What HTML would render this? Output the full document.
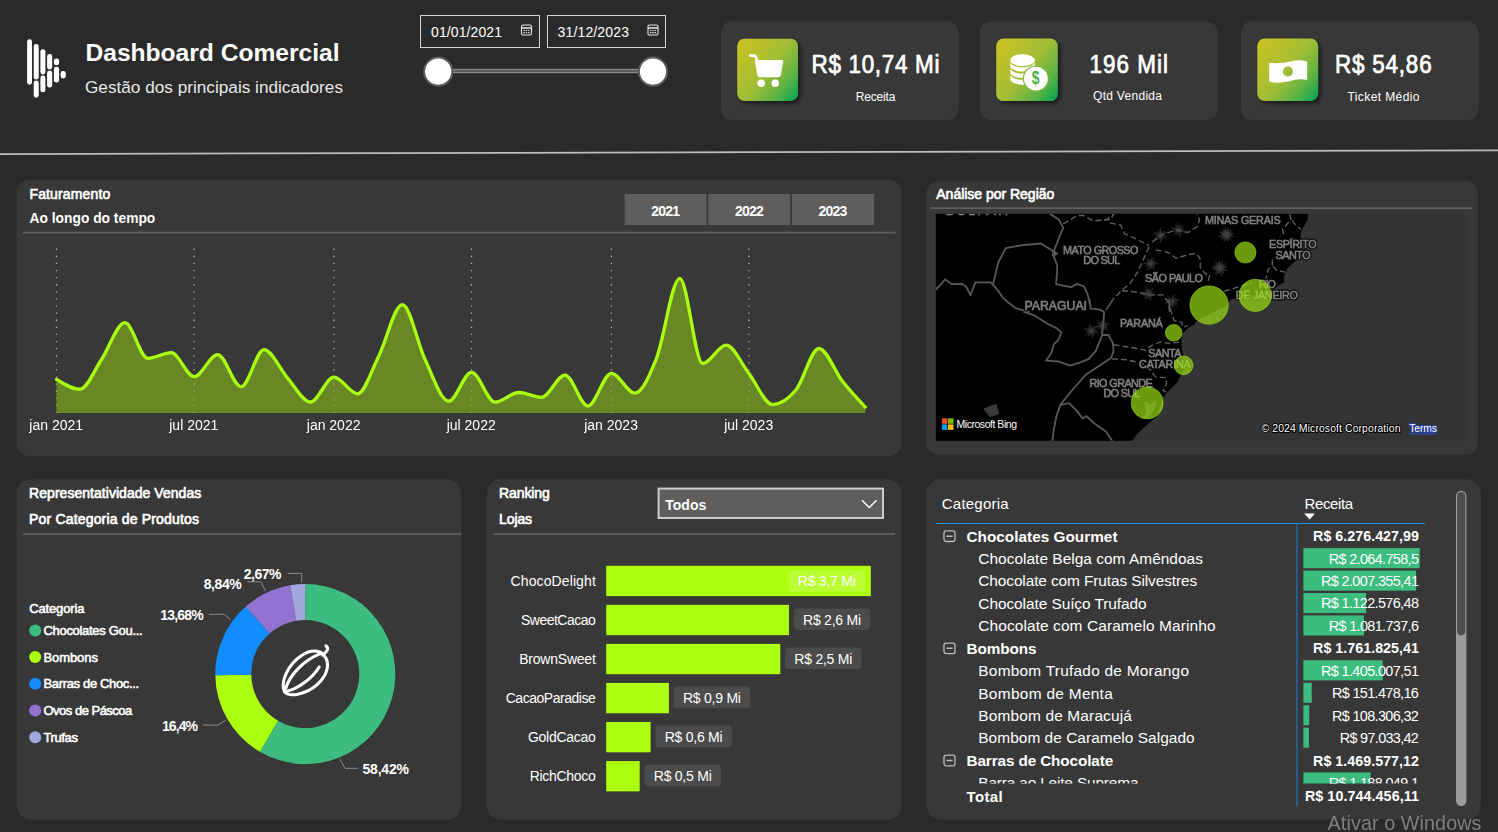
<!DOCTYPE html>
<html lang="pt-BR"><head><meta charset="utf-8"><title>Dashboard Comercial</title>
<style>
html,body{margin:0;padding:0}
body{width:1498px;height:832px;overflow:hidden;background:#2a2a2a;position:relative;font-family:'Liberation Sans',Arial,sans-serif;color:#fff}
section{position:absolute;display:block}
section svg{display:block;overflow:visible}

svg text{font-family:'Liberation Sans',Arial,sans-serif;white-space:pre}
.wm{position:absolute;left:0;top:0;width:1498px;height:832px;pointer-events:none}
</style></head>
<body>
<section class="hdr" style="left:0px;top:0px;width:700px;height:130px" aria-label="Cabeçalho"><svg width="700" height="130" viewBox="0 0 700 130">
<g fill="#fff"><rect x="27.1" y="39.3" width="4.9" height="45.4" rx="2.4" fill="#fff"/><rect x="33.7" y="44.1" width="5" height="35.5" rx="2.4" fill="#fff"/><rect x="33.7" y="80.5" width="5" height="17.2" rx="2.4" fill="#fff"/><rect x="40.4" y="49.2" width="5" height="25.2" rx="2.4" fill="#fff"/><rect x="40.4" y="75.4" width="5" height="16.9" rx="2.4" fill="#fff"/><rect x="47.1" y="54" width="5.1" height="15.5" rx="2.4" fill="#fff"/><rect x="47.1" y="70.6" width="5.1" height="17" rx="2.4" fill="#fff"/><rect x="53.9" y="58.6" width="5.2" height="6.7" rx="2.4" fill="#fff"/><rect x="53.9" y="66.8" width="5.2" height="15.8" rx="2.4" fill="#fff"/><rect x="60.6" y="71" width="5.2" height="7.4" rx="2.4" fill="#fff"/></g>
<text x="85.5" y="60.75" font-size="24.6" font-weight="700" fill="#fff" textLength="254" lengthAdjust="spacing">Dashboard Comercial</text>
<text x="85" y="93" font-size="17.2" fill="#e8e8e8" textLength="258" lengthAdjust="spacing">Gestão dos principais indicadores</text>
<rect x="420.5" y="15.5" width="119" height="32" fill="none" stroke="#d2d2d2" stroke-width="1"/>
<text x="431" y="37" font-size="14" fill="#fff" textLength="71" lengthAdjust="spacing">01/01/2021</text>
<g transform="translate(520.9 24.4)" fill="none" stroke="#e4e4e4" stroke-width="1.1"><rect x="0.6" y="0.6" width="10" height="10" rx="1.6"/><path d="M0.6 3.6H10.6" stroke-width="1.6"/><path d="M2.6 6.1h1.4M4.9 6.1h1.4M7.2 6.1h1.4M2.6 8.3h1.4M4.9 8.3h1.4M7.2 8.3h1.4" stroke-width="1.2"/></g>
<rect x="547.5" y="15.5" width="118" height="32" fill="none" stroke="#d2d2d2" stroke-width="1"/>
<text x="557.5" y="37" font-size="14" fill="#fff" textLength="71.5" lengthAdjust="spacing">31/12/2023</text>
<g transform="translate(647.4 24.4)" fill="none" stroke="#e4e4e4" stroke-width="1.1"><rect x="0.6" y="0.6" width="10" height="10" rx="1.6"/><path d="M0.6 3.6H10.6" stroke-width="1.6"/><path d="M2.6 6.1h1.4M4.9 6.1h1.4M7.2 6.1h1.4M2.6 8.3h1.4M4.9 8.3h1.4M7.2 8.3h1.4" stroke-width="1.2"/></g>
<rect x="438" y="68.8" width="215" height="4.4" fill="#8a8885"/>
<rect x="438" y="70" width="215" height="2" fill="#605e5c"/>
<circle cx="438.2" cy="71.6" r="15.1" fill="#5f5c58"/><circle cx="438.2" cy="71.6" r="13.1" fill="#fff"/>
<circle cx="653" cy="71.6" r="15.1" fill="#5f5c58"/><circle cx="653" cy="71.6" r="13.1" fill="#fff"/>
</svg></section>
<section class="kpi" style="left:700px;top:0px;width:798px;height:130px" aria-label="Indicadores"><svg width="798" height="130" viewBox="700 0 798 130">
<defs><linearGradient id="kg" x1="0" y1="0.1" x2="1" y2="0.9"><stop offset="0" stop-color="#c9c223"/><stop offset="0.5" stop-color="#a2be35"/><stop offset="0.78" stop-color="#62b444"/><stop offset="1" stop-color="#10a551"/></linearGradient><filter id="ks" x="-20%" y="-20%" width="150%" height="150%"><feDropShadow dx="2.5" dy="2.5" stdDeviation="2" flood-color="#000" flood-opacity="0.55"/></filter></defs>
<rect x="721" y="21.5" width="237.5" height="98.5" rx="10.5" fill="#383838"/>
<rect x="737.2" y="38.7" width="60.8" height="62.3" rx="7.4" fill="url(#kg)" filter="url(#ks)"/>
<rect x="979.7" y="21.5" width="237.8" height="98.5" rx="10.5" fill="#383838"/>
<rect x="996.2" y="38.5" width="61.6" height="62.6" rx="7.4" fill="url(#kg)" filter="url(#ks)"/>
<rect x="1241" y="21.5" width="237.5" height="98.5" rx="10.5" fill="#383838"/>
<rect x="1257.3" y="38.6" width="60.8" height="62.4" rx="7.4" fill="url(#kg)" filter="url(#ks)"/>
<text transform="translate(811.5 72.6) scale(0.9 1)" font-size="24.9" fill="#fff" textLength="142.22" lengthAdjust="spacing" stroke="#fff" stroke-width="0.75">R$ 10,74 Mi</text>
<text x="855.8" y="100.5" font-size="12" fill="#fff" textLength="39.6" lengthAdjust="spacing">Receita</text>
<text transform="translate(1089.5 72.8) scale(0.9 1)" font-size="24.9" fill="#fff" textLength="87.22" lengthAdjust="spacing" stroke="#fff" stroke-width="0.75">196 Mil</text>
<text x="1093" y="100" font-size="12" fill="#fff" textLength="69" lengthAdjust="spacing">Qtd Vendida</text>
<text transform="translate(1335 73.3) scale(0.9 1)" font-size="24.9" fill="#fff" textLength="107.33" lengthAdjust="spacing" stroke="#fff" stroke-width="0.75">R$ 54,86</text>
<text x="1347.5" y="100.6" font-size="12" fill="#fff" textLength="72" lengthAdjust="spacing">Ticket Médio</text>
<path d="M750.28 55.57 L753.57 55.57 Q755.76 55.57 756.22 57.94 L757.04 62.15" fill="none" stroke="#fff" stroke-width="2.7" stroke-linecap="round" stroke-linejoin="round"/>
<path d="M754.66 59.95 L781.89 59.95 Q783.53 59.95 783.26 61.6 L780.79 75.3 Q780.42 77.13 778.6 77.13 L759.41 77.31 Q757.77 77.31 757.4 75.66 Z" fill="#fff"/>
<circle cx="761.24" cy="83.34" r="3.75" fill="#fff"/><circle cx="775.22" cy="83.34" r="3.75" fill="#fff"/>
<ellipse cx="1022.53" cy="60.14" rx="12.24" ry="5.94" fill="#fff"/>
<path d="M1010.28 61.6 A12.24 5.76 0 0 0 1034.77 61.6 L1034.77 65.8 A12.24 5.76 0 0 1 1010.28 65.8 Z" fill="#fff"/>
<path d="M1010.28 67.81 A12.24 5.76 0 0 0 1034.77 67.81 L1034.77 72.19 A12.24 5.76 0 0 1 1010.28 72.19 Z" fill="#fff"/>
<path d="M1010.28 74.02 A12.24 5.76 0 0 0 1034.77 74.02 L1034.77 78.95 A12.24 5.76 0 0 1 1010.28 78.95 Z" fill="#fff"/>
<circle cx="1035.86" cy="78.59" r="13.06" fill="#80b83e"/>
<circle cx="1035.86" cy="78.59" r="11.88" fill="#fff"/>
<text transform="translate(1035.68 84.43) scale(0.8 1)" font-size="17.5" font-weight="700" text-anchor="middle" fill="#52ad47">$</text>
<path fill-rule="evenodd" fill="#fff" d="M1269.18 62.69 C1276.49 63.97 1284.71 62.69 1291.11 61.23 C1297.5 59.77 1302.98 59.95 1307.18 61.78 L1307.18 80.23 C1302.98 78.77 1297.5 79.32 1291.11 80.78 C1284.71 82.42 1276.49 83.7 1269.18 81.51 Z M1282.89 71.46 a5.02 5.02 0 1 0 10.05 0 a5.02 5.02 0 1 0 -10.05 0Z"/>
</svg></section>
<section class="card" style="left:16px;top:179px;width:886px;height:277px" aria-label="Faturamento"><svg width="886" height="277" viewBox="16 179 886 277">
<rect class="cardbg" x="16.6" y="179.9" width="885.2" height="276.1" rx="12.5" fill="#383838"/>
<text x="29.5" y="198.9" font-size="14" fill="#fff" textLength="80.7" lengthAdjust="spacing" stroke="#fff" stroke-width="0.65">Faturamento</text>
<text x="29.5" y="222.9" font-size="13.8" font-weight="700" fill="#fff" textLength="125.8" lengthAdjust="spacing">Ao longo do tempo</text>
<path d="M23 232.7H895.5" stroke="#615f5d" stroke-width="1.7"/>
<rect x="624.6" y="194" width="82" height="31" fill="#605e5c"/>
<text x="651.2" y="216" font-size="14" font-weight="700" fill="#fff" textLength="28.8" lengthAdjust="spacing">2021</text>
<rect x="708.3" y="194" width="82" height="31" fill="#605e5c"/>
<text x="734.9" y="216" font-size="14" font-weight="700" fill="#fff" textLength="28.8" lengthAdjust="spacing">2022</text>
<rect x="792" y="194" width="82" height="31" fill="#605e5c"/>
<text x="818.6" y="216" font-size="14" font-weight="700" fill="#fff" textLength="28.8" lengthAdjust="spacing">2023</text>
<g stroke="#b4b4b4" stroke-width="1.3" stroke-dasharray="1.3 5.8"><path d="M56.5 248.6V412.9"/><path d="M194.08 248.6V412.9"/><path d="M333.94 248.6V412.9"/><path d="M471.51 248.6V412.9"/><path d="M611.37 248.6V412.9"/><path d="M748.95 248.6V412.9"/></g>
<path d="M56.5 379.4 C64.35 384.3 72.21 389.2 80.06 389.2 C87.16 389.2 94.25 370.25 101.35 359.8 C109.2 348.23 117.05 322.7 124.91 322.7 C132.51 322.7 140.11 358.3 147.71 358.3 C155.57 358.3 163.42 352.7 171.28 352.7 C178.88 352.7 186.48 376.7 194.08 376.7 C201.93 376.7 209.79 354.6 217.64 354.6 C225.5 354.6 233.35 386.7 241.2 386.7 C248.81 386.7 256.41 349.6 264.01 349.6 C271.86 349.6 279.72 369.23 287.57 378.1 C295.17 386.69 302.77 402.1 310.37 402.1 C318.23 402.1 326.08 377.1 333.94 377.1 C341.79 377.1 349.65 393.8 357.5 393.8 C364.59 393.8 371.69 369.96 378.78 356 C386.64 340.54 394.49 304.6 402.35 304.6 C409.95 304.6 417.55 343.88 425.15 359.8 C433 376.25 440.86 401.2 448.71 401.2 C456.31 401.2 463.91 372.3 471.51 372.3 C479.37 372.3 487.22 402.1 495.08 402.1 C502.93 402.1 510.79 392.5 518.64 392.5 C526.24 392.5 533.84 397.3 541.44 397.3 C549.3 397.3 557.15 375.2 565.01 375.2 C572.61 375.2 580.21 406 587.81 406 C595.66 406 603.52 373.3 611.37 373.3 C619.23 373.3 627.08 393.1 634.94 393.1 C642.03 393.1 649.12 376.5 656.22 359 C664.07 339.62 671.93 278.3 679.78 278.3 C687.38 278.3 694.98 363.5 702.59 363.5 C710.44 363.5 718.29 345.2 726.15 345.2 C733.75 345.2 741.35 363.77 748.95 373.5 C756.81 383.55 764.66 404.6 772.51 404.6 C780.37 404.6 788.22 399.46 796.08 389.8 C803.68 380.46 811.28 348.5 818.88 348.5 C826.73 348.5 834.59 371.31 842.44 381.2 C850.04 390.78 857.65 398.94 865.25 407.1 L865.25 412.9 L56.5 412.9Z" fill="#6a8a25" fill-opacity="0.97"/>
<g stroke="#9fb46a" stroke-width="1.3" stroke-dasharray="1.3 5.8" opacity="0.8"><path d="M56.5 248.6V412.9" clip-path="url(#areaclip)"/><path d="M194.08 248.6V412.9" clip-path="url(#areaclip)"/><path d="M333.94 248.6V412.9" clip-path="url(#areaclip)"/><path d="M471.51 248.6V412.9" clip-path="url(#areaclip)"/><path d="M611.37 248.6V412.9" clip-path="url(#areaclip)"/><path d="M748.95 248.6V412.9" clip-path="url(#areaclip)"/></g>
<clipPath id="areaclip"><path d="M56.5 379.4 C64.35 384.3 72.21 389.2 80.06 389.2 C87.16 389.2 94.25 370.25 101.35 359.8 C109.2 348.23 117.05 322.7 124.91 322.7 C132.51 322.7 140.11 358.3 147.71 358.3 C155.57 358.3 163.42 352.7 171.28 352.7 C178.88 352.7 186.48 376.7 194.08 376.7 C201.93 376.7 209.79 354.6 217.64 354.6 C225.5 354.6 233.35 386.7 241.2 386.7 C248.81 386.7 256.41 349.6 264.01 349.6 C271.86 349.6 279.72 369.23 287.57 378.1 C295.17 386.69 302.77 402.1 310.37 402.1 C318.23 402.1 326.08 377.1 333.94 377.1 C341.79 377.1 349.65 393.8 357.5 393.8 C364.59 393.8 371.69 369.96 378.78 356 C386.64 340.54 394.49 304.6 402.35 304.6 C409.95 304.6 417.55 343.88 425.15 359.8 C433 376.25 440.86 401.2 448.71 401.2 C456.31 401.2 463.91 372.3 471.51 372.3 C479.37 372.3 487.22 402.1 495.08 402.1 C502.93 402.1 510.79 392.5 518.64 392.5 C526.24 392.5 533.84 397.3 541.44 397.3 C549.3 397.3 557.15 375.2 565.01 375.2 C572.61 375.2 580.21 406 587.81 406 C595.66 406 603.52 373.3 611.37 373.3 C619.23 373.3 627.08 393.1 634.94 393.1 C642.03 393.1 649.12 376.5 656.22 359 C664.07 339.62 671.93 278.3 679.78 278.3 C687.38 278.3 694.98 363.5 702.59 363.5 C710.44 363.5 718.29 345.2 726.15 345.2 C733.75 345.2 741.35 363.77 748.95 373.5 C756.81 383.55 764.66 404.6 772.51 404.6 C780.37 404.6 788.22 399.46 796.08 389.8 C803.68 380.46 811.28 348.5 818.88 348.5 C826.73 348.5 834.59 371.31 842.44 381.2 C850.04 390.78 857.65 398.94 865.25 407.1 L865.25 412.9 L56.5 412.9Z"/></clipPath>
<path d="M56.5 379.4 C64.35 384.3 72.21 389.2 80.06 389.2 C87.16 389.2 94.25 370.25 101.35 359.8 C109.2 348.23 117.05 322.7 124.91 322.7 C132.51 322.7 140.11 358.3 147.71 358.3 C155.57 358.3 163.42 352.7 171.28 352.7 C178.88 352.7 186.48 376.7 194.08 376.7 C201.93 376.7 209.79 354.6 217.64 354.6 C225.5 354.6 233.35 386.7 241.2 386.7 C248.81 386.7 256.41 349.6 264.01 349.6 C271.86 349.6 279.72 369.23 287.57 378.1 C295.17 386.69 302.77 402.1 310.37 402.1 C318.23 402.1 326.08 377.1 333.94 377.1 C341.79 377.1 349.65 393.8 357.5 393.8 C364.59 393.8 371.69 369.96 378.78 356 C386.64 340.54 394.49 304.6 402.35 304.6 C409.95 304.6 417.55 343.88 425.15 359.8 C433 376.25 440.86 401.2 448.71 401.2 C456.31 401.2 463.91 372.3 471.51 372.3 C479.37 372.3 487.22 402.1 495.08 402.1 C502.93 402.1 510.79 392.5 518.64 392.5 C526.24 392.5 533.84 397.3 541.44 397.3 C549.3 397.3 557.15 375.2 565.01 375.2 C572.61 375.2 580.21 406 587.81 406 C595.66 406 603.52 373.3 611.37 373.3 C619.23 373.3 627.08 393.1 634.94 393.1 C642.03 393.1 649.12 376.5 656.22 359 C664.07 339.62 671.93 278.3 679.78 278.3 C687.38 278.3 694.98 363.5 702.59 363.5 C710.44 363.5 718.29 345.2 726.15 345.2 C733.75 345.2 741.35 363.77 748.95 373.5 C756.81 383.55 764.66 404.6 772.51 404.6 C780.37 404.6 788.22 399.46 796.08 389.8 C803.68 380.46 811.28 348.5 818.88 348.5 C826.73 348.5 834.59 371.31 842.44 381.2 C850.04 390.78 857.65 398.94 865.25 407.1" fill="none" stroke="#a9ff10" stroke-width="3.3" stroke-linecap="round" stroke-linejoin="round"/>
<text x="56.2" y="430" font-size="14" text-anchor="middle" fill="#fff">jan 2021</text>
<text x="193.78" y="430" font-size="14" text-anchor="middle" fill="#fff">jul 2021</text>
<text x="333.64" y="430" font-size="14" text-anchor="middle" fill="#fff">jan 2022</text>
<text x="471.21" y="430" font-size="14" text-anchor="middle" fill="#fff">jul 2022</text>
<text x="611.07" y="430" font-size="14" text-anchor="middle" fill="#fff">jan 2023</text>
<text x="748.65" y="430" font-size="14" text-anchor="middle" fill="#fff">jul 2023</text>
</svg></section>
<section class="card" style="left:926px;top:181px;width:553px;height:274px" aria-label="Análise por Região"><svg width="553" height="274" viewBox="926 181 553 274">
<rect class="cardbg" x="926.4" y="181.2" width="551.7" height="273.6" rx="12.5" fill="#383838"/>
<text x="936.3" y="198.9" font-size="14" fill="#fff" textLength="118" lengthAdjust="spacing" stroke="#fff" stroke-width="0.65">Análise por Região</text>
<path d="M930 208.1H1472.5" stroke="#615f5d" stroke-width="1.7"/>
<clipPath id="mclip"><rect x="935.8" y="213.8" width="531.2" height="227"/></clipPath>
<g clip-path="url(#mclip)">
<rect x="935.8" y="213.8" width="531.2" height="227" fill="#343434"/>
<path d="M933.8 211.8 L1307.73 211.8 L1307.73 213.8 L1307.97 219.21 L1305.32 224.02 L1302.32 228.82 L1300.52 234.83 L1300.76 240.84 L1300.52 248.05 L1299.56 254.06 L1298.11 258.86 L1292.11 263.67 L1287.3 268.48 L1284.9 273.28 L1283.69 279.29 L1284.9 281.69 L1278.89 285.3 L1274.08 288.9 L1264.47 291.91 L1250.05 296.11 L1238.03 297.92 L1232.02 298.76 L1227.22 303.32 L1228.04 305.93 L1219.63 308.74 L1212.15 313.41 L1201.87 318.08 L1195.33 322.76 L1194.65 323.89 L1187.82 328.16 L1181.85 334.13 L1181.34 342.66 L1181.85 349.49 L1183.56 356.31 L1184.41 368.26 L1181 375.09 L1177.58 381.91 L1169.05 390.44 L1163.08 397.27 L1160.52 405.8 L1157.11 416.04 L1150.28 422.01 L1143.45 427.99 L1136.63 434.81 L1131.51 441.64 L1130.51 442.8 L933.8 442.8Z" fill="#000"/>
<path d="M1144.48 402.05 C1145.22 400.97 1148.74 404.72 1150.62 404.44 C1152.5 404.15 1155.17 399.54 1155.74 400.34 C1156.31 401.14 1155.06 406.54 1154.03 409.22 C1153.01 411.89 1151.36 414.9 1149.6 416.38 C1147.83 417.86 1144.02 419 1143.45 418.09 C1142.89 417.18 1146.01 413.59 1146.18 410.92 C1146.35 408.25 1143.74 403.13 1144.48 402.05Z" fill="#343434"/>
<path d="M983.27 408.5 L996.36 403.83 L999.16 414.11 L989.81 416.92 L986.07 412.24Z" fill="#3a3a3a"/>
<g fill="none" stroke="#585858" stroke-width="1.8" stroke-linejoin="round" stroke-linecap="round"><path d="M935.8 289.51 L941.21 284.1 L945.06 279.29 L951.42 284.1 L961.64 283.86 L966.2 286.5 L970.41 295.15 L975.46 282.3 L990.48 282.3 L992.88 284.7"/><path d="M992.88 284.7 L998.29 262.47 L1005.74 248.05 L1022.92 245.04 L1040.95 243.48 L1052.96 251.05 L1057.17 253.46 L1052.96 255.86 L1052.96 251.05"/><path d="M1049.96 213.8 L1058.97 219.81 L1063.18 227.62 L1058.97 237.84 L1054.16 250.45"/><path d="M1054.16 251.65 L1054.16 257.66 L1057.17 264.87 L1057.17 272.08 L1055.97 284.1 L1070.99 287.1 L1076.99 283.86 L1084.2 286.5 L1087.81 294.91 L1090.21 305.73 L1089.7 300 L1090.55 308.53 L1099.09 309.39 L1104.2 311.95 L1103.35 322.18 L1102.16 334.13"/><path d="M992.88 284.7 L997.69 290.11 L1002.49 297.32 L1008.5 302.72 L1015.71 308.13 L1028.93 311.98 L1024 311.95 L1034.24 315.36 L1046.18 323.04 L1056.42 328.16 L1061.54 332.42 L1058.13 340.1 L1053.86 344.37 L1051.3 352.9 L1046.18 360.58 L1058.13 361.43 L1070.08 365.7 L1080.31 362.29 L1088.85 358.87 L1095.67 351.19 L1099.94 340.96 L1102.16 334.98"/><path d="M1102.16 334.98 L1108.47 334.98 L1112.74 342.66 L1113.59 351.19 L1111.03 358.02 L1100.79 364.85 L1085.43 375.09 L1073.49 388.74 L1060.69 404.1"/><path d="M1060.69 404.1 L1056.42 416.04 L1053.86 429.69 L1052.16 441.64"/><path d="M1060.69 404.95 L1069.22 403.24 L1076.9 410.92 L1082.87 418.6 L1086.29 416.04 L1095.67 424.57 L1105.91 431.4 L1112.74 441.64"/></g>
<g fill="none" stroke="#606060" stroke-width="1.35" stroke-dasharray="6 3" stroke-linejoin="round"><path d="M1063.18 224.02 L1076.99 215.6 L1083 215.36 L1093.82 221.01 L1107.04 219.21 L1114 213.8"/><path d="M1104 220.41 L1111.21 219.21 L1113.01 214.4"/><path d="M1110.01 222.81 L1120.82 225.22 L1124.43 233.63 L1137.65 239.64 L1149.06 245.65"/><path d="M1152.07 242.04 L1161.68 234.83 L1176.1 230.02 L1188.11 232.43 L1197.73 226.42 L1199.53 219.21 L1196.53 214.4"/><path d="M1155.67 249.85 L1168.89 252.86 L1176.1 258.26 L1188.11 254.66 L1196.53 253.46 L1200.73 260.07 L1200.13 267.28 L1206.14 274.48 L1209.74 274.48 L1207.94 281.69"/><path d="M1149.06 246.85 L1143.65 258.86 L1137.65 272.08 L1130.44 282.9 L1122.02 290.11 L1113.61 298.52 L1106.4 309.33 L1112.74 300 L1105.91 310.24"/><path d="M1122.02 290.71 L1135.24 291.91 L1149.66 294.91 L1162.88 294.91 L1168.89 303.32 L1169.49 311.98 L1169.05 300 L1170.76 310.24 L1174.17 320.48 L1181.85 322.18 L1182.7 327.3 L1187.82 325.6"/><path d="M1224.16 291.31 L1239.78 286.5 L1251.8 282.9"/><path d="M1289.7 213.8 L1290.9 219.21 L1286.1 225.22 L1282.49 228.82 L1284.3 237.23"/><path d="M1292.11 220.41 L1295.71 225.22 L1301.12 229.42"/><path d="M1272.28 259.46 L1272.28 264.87 L1268.07 269.68 L1266.87 275.69 L1265.67 279.29"/><path d="M1272.88 266.07 L1276.48 270.28 L1284.9 272.08"/><path d="M1113.59 344.71 L1133.22 347.78 L1146.01 350.34 L1150.28 346.08 L1160.52 341.81 L1169.05 343.52 L1181 341.81"/><path d="M1111.88 358.87 L1126.39 359.73 L1141.75 363.14 L1150.28 369.97 L1155.4 376.79 L1165.64 377.65 L1166.49 383.62 L1163.08 390.44 L1166.49 392.15"/></g>
<path d="M1157.53 231.9L1163.42 238.97M1158.41 229.69L1162.54 241.17M1160.51 227.83L1160.45 243.03M1162.07 231.12L1158.89 239.75M1164.42 230.78L1156.54 240.09M1167.07 231.66L1153.88 239.2M1165.01 234.65L1155.94 236.21M1166.48 236.52L1154.47 234.35M1167.04 239.26L1153.91 231.6M1174.99 227.06L1182.02 232.99M1175.47 224.73L1181.53 235.32M1177.21 222.54L1179.8 237.51M1179.31 225.5L1177.69 234.55M1181.57 224.75L1175.43 235.3M1184.34 225.16L1172.66 234.89M1182.83 228.47L1174.17 231.58M1184.6 230.04L1172.4 230.01M1185.63 232.65L1171.37 227.4M1222.95 231.39L1230.18 237.07M1223.35 229.05L1229.78 239.41M1225.01 226.79L1228.12 241.67M1227.22 229.68L1225.91 238.78M1229.45 228.85L1223.68 239.61M1232.23 229.16L1220.9 239.3M1230.84 232.52L1222.3 235.94M1232.66 234.04L1220.47 234.42M1233.79 236.6L1219.35 231.86M1217.94 262.9L1220.78 271.65M1219.57 261.18L1219.14 273.37M1222.21 260.23L1216.51 274.32M1222.44 263.86L1216.28 270.69M1224.74 264.41L1213.97 270.14M1226.88 266.22L1211.83 268.33M1223.86 268.23L1214.86 266.32M1224.53 270.51L1214.18 264.04M1224.03 273.27L1214.68 261.29M1146.56 262.03L1155.16 265.31M1146.25 259.68L1155.48 267.66M1147.16 257.03L1154.57 270.31M1150.13 259.13L1151.6 268.21M1152.01 257.68L1149.72 269.66M1154.76 257.14L1146.97 270.2M1154.43 260.77L1147.3 266.58M1156.63 261.67L1145.1 265.67M1158.46 263.78L1143.26 263.56M1144.56 291.27L1152.36 296.16M1144.71 288.9L1152.21 298.53M1146.13 286.48L1150.79 300.94M1148.63 289.11L1148.29 298.31M1150.76 288.06L1146.16 299.36M1153.56 288.07L1143.36 299.35M1152.53 291.56L1144.39 295.86M1154.5 292.87L1142.42 294.55M1155.89 295.31L1141.03 292.12M1170.8 297.25L1174.19 305.8M1172.32 295.42L1172.67 307.62M1174.89 294.31L1170.1 308.73M1175.35 297.91L1169.64 305.13M1177.69 298.32L1167.3 304.72M1179.94 299.99L1165.05 303.05M1177.04 302.19L1167.94 300.85M1177.86 304.42L1167.13 298.62M1177.54 307.2L1167.44 295.84M1097.92 325.15L1107.08 326.05M1097 322.96L1108 328.24M1097.18 320.16L1107.81 331.03M1100.6 321.41L1104.4 329.79M1102.03 319.51L1102.96 331.68M1104.55 318.28L1100.45 332.92M1105.18 321.86L1099.82 329.34M1107.53 322.15L1097.46 329.04M1109.86 323.71L1095.14 327.48M1087.91 327.73L1094.91 333.7M1088.4 325.41L1094.41 336.02M1090.15 323.22L1092.67 338.21M1092.24 326.19L1090.57 335.24M1094.5 325.46L1088.31 335.97M1097.27 325.88L1085.55 335.56M1095.74 329.18L1087.07 332.26M1097.51 330.77L1085.31 330.67M1098.53 333.37L1084.29 328.06M1221.45 234.3L1230.59 235.37M1220.57 232.09L1231.47 237.57M1220.8 229.3L1231.23 240.36M1224.19 230.61L1227.84 239.05M1225.66 228.74L1226.37 240.92M1228.2 227.55L1223.84 242.11M1228.76 231.14L1223.27 238.52M1231.11 231.48L1220.92 238.18M1233.41 233.08L1218.62 236.58M1216.23 265.85L1223.78 271.11M1216.5 263.49L1223.52 273.46M1218.02 261.14L1221.99 275.81M1220.4 263.89L1219.62 273.06M1222.57 262.94L1217.45 274.01M1225.37 263.09L1214.65 273.87M1224.17 266.52L1215.84 270.43M1226.08 267.93L1213.93 269.02M1227.35 270.42L1212.66 266.53" stroke="#505050" stroke-width="0.75" opacity="0.8"/>
<g fill="#0a0a0a" stroke="#0a0a0a" stroke-width="2.8" stroke-linejoin="round" opacity="0.99">
<text x="1063.1" y="253.6" font-size="10.8" textLength="75.3" lengthAdjust="spacing">MATO GROSSO</text>
<text x="1083.3" y="263.9" font-size="10.8" textLength="37" lengthAdjust="spacing">DO SUL</text>
<text x="1024.4" y="309.8" font-size="12.3" textLength="62.6" lengthAdjust="spacing">PARAGUAI</text>
<text x="1144.9" y="282.4" font-size="10.8" textLength="58.1" lengthAdjust="spacing">SÃO PAULO</text>
<text x="1120.1" y="327.4" font-size="10.8" textLength="42.6" lengthAdjust="spacing">PARANÁ</text>
<text x="1204.9" y="223.5" font-size="10.8" textLength="75.8" lengthAdjust="spacing">MINAS GERAIS</text>
<text x="1269.1" y="248.1" font-size="10.8" textLength="47.5" lengthAdjust="spacing">ESPÍRITO</text>
<text x="1275.4" y="258.9" font-size="10.8" textLength="35.2" lengthAdjust="spacing">SANTO</text>
<text x="1259.1" y="288.3" font-size="10.8" textLength="16.8" lengthAdjust="spacing">RIO</text>
<text x="1235.8" y="299.2" font-size="10.8" textLength="62.2" lengthAdjust="spacing">DE JANEIRO</text>
<text x="1148.3" y="357.2" font-size="10.8" textLength="33.1" lengthAdjust="spacing">SANTA</text>
<text x="1139" y="368" font-size="10.8" textLength="51.8" lengthAdjust="spacing">CATARINA</text>
<text x="1089.4" y="386.6" font-size="10.8" textLength="63.4" lengthAdjust="spacing">RIO GRANDE</text>
<text x="1103.5" y="397.3" font-size="10.8" textLength="36.8" lengthAdjust="spacing">DO SUL</text>
<text x="946" y="214.9" font-size="12.3" textLength="61.3" lengthAdjust="spacing">BOLÍVIA</text>
</g>
<g fill="#858585" stroke="#858585" stroke-width="0.5" opacity="0.99">
<text x="1063.1" y="253.6" font-size="10.8" textLength="75.3" lengthAdjust="spacing">MATO GROSSO</text>
<text x="1083.3" y="263.9" font-size="10.8" textLength="37" lengthAdjust="spacing">DO SUL</text>
<text x="1024.4" y="309.8" font-size="12.3" textLength="62.6" lengthAdjust="spacing">PARAGUAI</text>
<text x="1144.9" y="282.4" font-size="10.8" textLength="58.1" lengthAdjust="spacing">SÃO PAULO</text>
<text x="1120.1" y="327.4" font-size="10.8" textLength="42.6" lengthAdjust="spacing">PARANÁ</text>
<text x="1204.9" y="223.5" font-size="10.8" textLength="75.8" lengthAdjust="spacing">MINAS GERAIS</text>
<text x="1269.1" y="248.1" font-size="10.8" textLength="47.5" lengthAdjust="spacing">ESPÍRITO</text>
<text x="1275.4" y="258.9" font-size="10.8" textLength="35.2" lengthAdjust="spacing">SANTO</text>
<text x="1259.1" y="288.3" font-size="10.8" textLength="16.8" lengthAdjust="spacing">RIO</text>
<text x="1235.8" y="299.2" font-size="10.8" textLength="62.2" lengthAdjust="spacing">DE JANEIRO</text>
<text x="1148.3" y="357.2" font-size="10.8" textLength="33.1" lengthAdjust="spacing">SANTA</text>
<text x="1139" y="368" font-size="10.8" textLength="51.8" lengthAdjust="spacing">CATARINA</text>
<text x="1089.4" y="386.6" font-size="10.8" textLength="63.4" lengthAdjust="spacing">RIO GRANDE</text>
<text x="1103.5" y="397.3" font-size="10.8" textLength="36.8" lengthAdjust="spacing">DO SUL</text>
<text x="946" y="214.9" font-size="12.3" textLength="61.3" lengthAdjust="spacing">BOLÍVIA</text>
</g>
<circle cx="1245.4" cy="252.5" r="10.6" fill="#a4ea14" fill-opacity="0.66" stroke="#9be21a" stroke-opacity="0.55" stroke-width="1"/>
<circle cx="1209.1" cy="305.1" r="19.2" fill="#a4ea14" fill-opacity="0.66" stroke="#9be21a" stroke-opacity="0.55" stroke-width="1"/>
<circle cx="1255.2" cy="295.4" r="16.2" fill="#a4ea14" fill-opacity="0.66" stroke="#9be21a" stroke-opacity="0.55" stroke-width="1"/>
<circle cx="1173.7" cy="332.8" r="8.3" fill="#a4ea14" fill-opacity="0.66" stroke="#9be21a" stroke-opacity="0.55" stroke-width="1"/>
<circle cx="1183.6" cy="365.3" r="9.4" fill="#a4ea14" fill-opacity="0.66" stroke="#9be21a" stroke-opacity="0.55" stroke-width="1"/>
<circle cx="1147.2" cy="402.9" r="16" fill="#a4ea14" fill-opacity="0.66" stroke="#9be21a" stroke-opacity="0.55" stroke-width="1"/>
<rect x="941.9" y="418.3" width="5.5" height="5.5" fill="#f25022"/>
<rect x="948" y="418.3" width="5.5" height="5.5" fill="#7fba00"/>
<rect x="941.9" y="424.4" width="5.5" height="5.5" fill="#00a4ef"/>
<rect x="948" y="424.4" width="5.5" height="5.5" fill="#ffb900"/>
<text x="956.5" y="427.7" font-size="10.5" fill="#fff" textLength="60.5" lengthAdjust="spacing">Microsoft Bing</text>
<text x="1261.5" y="431.6" font-size="10.5" fill="#fff" textLength="139" lengthAdjust="spacing" stroke="#000" stroke-width="2" paint-order="stroke" stroke-linejoin="round">© 2024 Microsoft Corporation</text>
<text x="1409.3" y="431.6" font-size="10.5" fill="#fff" textLength="27.7" lengthAdjust="spacing" stroke="#2540a8" stroke-width="1.8" paint-order="stroke" stroke-linejoin="round">Terms</text>
<path d="M1409 433.9H1437.2" stroke="#2c4ab8" stroke-width="1.2"/>
</g>
</svg></section>
<section class="card" style="left:16px;top:479px;width:446px;height:341px" aria-label="Representatividade Vendas"><svg width="446" height="341" viewBox="16 479 446 341">
<rect class="cardbg" x="16.6" y="479.3" width="444.7" height="340.4" rx="14.5" fill="#383838"/>
<text x="29.1" y="498" font-size="14" fill="#fff" textLength="172.1" lengthAdjust="spacing" stroke="#fff" stroke-width="0.65">Representatividade Vendas</text>
<text x="29.1" y="524.1" font-size="14" fill="#fff" textLength="169.8" lengthAdjust="spacing" stroke="#fff" stroke-width="0.65">Por Categoria de Produtos</text>
<path d="M23 534.1H461.3" stroke="#615f5d" stroke-width="1.7"/>
<text x="29.2" y="613.2" font-size="13" fill="#fff" textLength="55.3" lengthAdjust="spacing" stroke="#fff" stroke-width="0.55">Categoria</text>
<circle cx="35.2" cy="630.6" r="6" fill="#3dbc80"/>
<text x="43.5" y="635" font-size="13" fill="#fff" textLength="99.2" lengthAdjust="spacing" stroke="#fff" stroke-width="0.55">Chocolates Gou...</text>
<circle cx="35.2" cy="657.1" r="6" fill="#adff10"/>
<text x="43.5" y="661.5" font-size="13" fill="#fff" textLength="54.4" lengthAdjust="spacing" stroke="#fff" stroke-width="0.55">Bombons</text>
<circle cx="35.2" cy="683.7" r="6" fill="#118dff"/>
<text x="43.5" y="688.1" font-size="13" fill="#fff" textLength="95.7" lengthAdjust="spacing" stroke="#fff" stroke-width="0.55">Barras de Choc...</text>
<circle cx="35.2" cy="710.6" r="6" fill="#9373d1"/>
<text x="43.5" y="715" font-size="13" fill="#fff" textLength="88.8" lengthAdjust="spacing" stroke="#fff" stroke-width="0.55">Ovos de Páscoa</text>
<circle cx="35.2" cy="737.2" r="6" fill="#a0a7dc"/>
<text x="43.5" y="741.6" font-size="13" fill="#fff" textLength="34.4" lengthAdjust="spacing" stroke="#fff" stroke-width="0.55">Trufas</text>
<path d="M305.3 584.1 A90 90 0 1 1 259.9 751.81 L278.06 720.73 A54 54 0 1 0 305.3 620.1Z" fill="#3dbc80"/>
<path d="M259.9 751.81 A90 90 0 0 1 215.31 675.16 L251.3 674.74 A54 54 0 0 0 278.06 720.73Z" fill="#adff10"/>
<path d="M215.31 675.16 A90 90 0 0 1 245.74 606.62 L269.57 633.61 A54 54 0 0 0 251.3 674.74Z" fill="#118dff"/>
<path d="M245.74 606.62 A90 90 0 0 1 290.27 585.36 L296.28 620.86 A54 54 0 0 0 269.57 633.61Z" fill="#9373d1"/>
<path d="M290.27 585.36 A90 90 0 0 1 305.3 584.1 L305.3 620.1 A54 54 0 0 0 296.28 620.86Z" fill="#a0a7dc"/>
<g fill="none" stroke="#8a8a8a" stroke-width="1"><path d="M339.9 759L345 768.3H357.7"/><path d="M225.7 720.3L217.8 725.1H203.1"/><path d="M230.5 619.4L224 614.3H208.8"/><path d="M265.3 590.9L261 581.8H247.5"/><path d="M301.7 582.4V573.4H287.6"/></g>
<text x="362.5" y="774" font-size="14" font-weight="700" fill="#fff" textLength="46.5" lengthAdjust="spacing">58,42%</text>
<text x="161.9" y="730.8" font-size="14" font-weight="700" fill="#fff" textLength="36.1" lengthAdjust="spacing">16,4%</text>
<text x="160.2" y="620" font-size="14" font-weight="700" fill="#fff" textLength="43.5" lengthAdjust="spacing">13,68%</text>
<text x="203.7" y="588.9" font-size="14" font-weight="700" fill="#fff" textLength="38.1" lengthAdjust="spacing">8,84%</text>
<text x="243.8" y="579" font-size="14" font-weight="700" fill="#fff" textLength="37.6" lengthAdjust="spacing">2,67%</text>
<g fill="none" stroke="#fff" stroke-width="3.1" stroke-linecap="round" stroke-linejoin="round"><path d="M284.47 691.54 C280.1 682.11 287.67 664.45 301.97 655.19 C312.07 648.88 320.48 650.56 323.84 655.19 C330.58 662.76 328.05 674.54 317.11 684.64 C305.34 695.15 288.51 697.26 284.47 691.54Z"/><path d="M285.56 688.84 C289.35 675.38 303.65 660.24 320.48 653.68"/><path d="M287.25 691.2 C297.76 688.84 312.07 678.75 319.22 666.97"/><path d="M322.58 655.02 C327.21 651.83 329.31 648.46 325.95 645.77"/></g>
</svg></section>
<section class="card" style="left:486px;top:479px;width:416px;height:341px" aria-label="Ranking Lojas"><svg width="416" height="341" viewBox="486 479 416 341">
<rect class="cardbg" x="486.6" y="479.3" width="415.1" height="340.4" rx="14.5" fill="#383838"/>
<text x="499.1" y="498" font-size="14" fill="#fff" textLength="50.7" lengthAdjust="spacing" stroke="#fff" stroke-width="0.65">Ranking</text>
<text x="499.1" y="524" font-size="14" fill="#fff" textLength="33" lengthAdjust="spacing" stroke="#fff" stroke-width="0.65">Lojas</text>
<path d="M493 534.1H895" stroke="#615f5d" stroke-width="1.7"/>
<rect x="658.6" y="488.6" width="224.4" height="29.4" fill="#605e5c" stroke="#cfcdcb" stroke-width="2"/>
<text x="665.3" y="510" font-size="14" font-weight="700" fill="#fff">Todos</text>
<path d="M862 500.2L869.3 507.6L876.6 500.2" fill="none" stroke="#fff" stroke-width="1.4"/>
<rect x="606.2" y="565.8" width="264.6" height="30.3" fill="#adff10"/>
<text x="510.5" y="586.2" font-size="14" fill="#fff" textLength="85.3" lengthAdjust="spacing">ChocoDelight</text>
<rect x="788.5" y="570.5" width="76.5" height="21.3" rx="3.5" fill="#fff" fill-opacity="0.15"/>
<text x="797.75" y="586.2" font-size="14" fill="#fff" textLength="58" lengthAdjust="spacing">R$ 3,7 Mi</text>
<rect x="606.2" y="604.85" width="182.8" height="30.3" fill="#adff10"/>
<text x="521" y="625.25" font-size="14" fill="#fff" textLength="74.8" lengthAdjust="spacing">SweetCacao</text>
<rect x="793.8" y="608.45" width="76.5" height="21.6" rx="3.5" fill="#4b4b4b"/>
<text x="803.05" y="625.25" font-size="14" fill="#fff" textLength="58" lengthAdjust="spacing">R$ 2,6 Mi</text>
<rect x="606.2" y="643.9" width="174.1" height="30.3" fill="#adff10"/>
<text x="519.2" y="664.3" font-size="14" fill="#fff" textLength="76.6" lengthAdjust="spacing">BrownSweet</text>
<rect x="785.1" y="647.5" width="76.5" height="21.6" rx="3.5" fill="#4b4b4b"/>
<text x="794.35" y="664.3" font-size="14" fill="#fff" textLength="58" lengthAdjust="spacing">R$ 2,5 Mi</text>
<rect x="606.2" y="682.95" width="62.7" height="30.3" fill="#adff10"/>
<text x="505.7" y="703.35" font-size="14" fill="#fff" textLength="90.1" lengthAdjust="spacing">CacaoParadise</text>
<rect x="673.7" y="686.55" width="76.5" height="21.6" rx="3.5" fill="#4b4b4b"/>
<text x="682.95" y="703.35" font-size="14" fill="#fff" textLength="58" lengthAdjust="spacing">R$ 0,9 Mi</text>
<rect x="606.2" y="722" width="44.4" height="30.3" fill="#adff10"/>
<text x="527.9" y="742.4" font-size="14" fill="#fff" textLength="67.9" lengthAdjust="spacing">GoldCacao</text>
<rect x="655.4" y="725.6" width="76.5" height="21.6" rx="3.5" fill="#4b4b4b"/>
<text x="664.65" y="742.4" font-size="14" fill="#fff" textLength="58" lengthAdjust="spacing">R$ 0,6 Mi</text>
<rect x="606.2" y="761.05" width="33.5" height="30.3" fill="#adff10"/>
<text x="529.7" y="781.45" font-size="14" fill="#fff" textLength="66.1" lengthAdjust="spacing">RichChoco</text>
<rect x="644.5" y="764.65" width="76.5" height="21.6" rx="3.5" fill="#4b4b4b"/>
<text x="653.75" y="781.45" font-size="14" fill="#fff" textLength="58" lengthAdjust="spacing">R$ 0,5 Mi</text>
</svg></section>
<section class="card" style="left:926px;top:479px;width:555px;height:341px" aria-label="Tabela Receita"><svg width="555" height="341" viewBox="926 479 555 341">
<rect class="cardbg" x="926.5" y="479.3" width="554.5" height="340.4" rx="14.5" fill="#383838"/>
<text x="941.8" y="508.9" font-size="15" fill="#fff" textLength="66.8" lengthAdjust="spacing">Categoria</text>
<text x="1304.6" y="508.9" font-size="15" fill="#fff" textLength="48.4" lengthAdjust="spacing">Receita</text>
<path d="M1304.2 513.6H1315L1309.6 519.4Z" fill="#fff"/>
<path d="M936 523.5H1425" stroke="#1e8cf0" stroke-width="1.2"/>
<path d="M1296.9 523.5V806.3" stroke="#1f74c0" stroke-width="1.2"/>
<clipPath id="tclip"><rect x="930" y="524" width="500" height="259.4"/></clipPath><g clip-path="url(#tclip)">
<g transform="translate(943.4 530.6)" fill="none" stroke="#b9b9b9" stroke-width="1.3"><rect x="0.6" y="0.3" width="11" height="10.6" rx="2.2"/><path d="M3 5.6H9.2" stroke-width="1.5"/></g>
<text transform="translate(966.5 541.6) scale(1.02 1)" font-size="15" font-weight="700" fill="#fff" textLength="148.04" lengthAdjust="spacing">Chocolates Gourmet</text>
<text transform="translate(1313.1 541.2) scale(1.02 1)" font-size="14" font-weight="700" fill="#fff" textLength="103.73" lengthAdjust="spacing">R$ 6.276.427,99</text>
<rect x="1303.4" y="548.13" width="116.3" height="20.1" fill="#3dbc80"/>
<text transform="translate(978.3 564.03) scale(1.03 1)" font-size="15" fill="#fff" textLength="218.06" lengthAdjust="spacing">Chocolate Belga com Amêndoas</text>
<text transform="translate(1328.8 563.63) scale(1.03 1)" font-size="14" fill="#fff" textLength="87.48" lengthAdjust="spacing">R$ 2.064.758,5</text>
<rect x="1303.4" y="570.56" width="112.7" height="20.1" fill="#3dbc80"/>
<text transform="translate(978.3 586.46) scale(1.03 1)" font-size="15" fill="#fff" textLength="212.52" lengthAdjust="spacing">Chocolate com Frutas Silvestres</text>
<text transform="translate(1321 586.06) scale(1.03 1)" font-size="14" fill="#fff" textLength="95.05" lengthAdjust="spacing">R$ 2.007.355,41</text>
<rect x="1303.4" y="592.99" width="62.7" height="20.1" fill="#3dbc80"/>
<text transform="translate(978.3 608.89) scale(1.03 1)" font-size="15" fill="#fff" textLength="163.5" lengthAdjust="spacing">Chocolate Suíço Trufado</text>
<text transform="translate(1321 608.49) scale(1.03 1)" font-size="14" fill="#fff" textLength="95.05" lengthAdjust="spacing">R$ 1.122.576,48</text>
<rect x="1303.4" y="615.42" width="60.5" height="20.1" fill="#3dbc80"/>
<text transform="translate(978.3 631.32) scale(1.03 1)" font-size="15" fill="#fff" textLength="230.29" lengthAdjust="spacing">Chocolate com Caramelo Marinho</text>
<text transform="translate(1328.8 630.92) scale(1.03 1)" font-size="14" fill="#fff" textLength="87.48" lengthAdjust="spacing">R$ 1.081.737,6</text>
<g transform="translate(943.4 642.75)" fill="none" stroke="#b9b9b9" stroke-width="1.3"><rect x="0.6" y="0.3" width="11" height="10.6" rx="2.2"/><path d="M3 5.6H9.2" stroke-width="1.5"/></g>
<text transform="translate(966.5 653.75) scale(1.02 1)" font-size="15" font-weight="700" fill="#fff" textLength="68.73" lengthAdjust="spacing">Bombons</text>
<text transform="translate(1313.1 653.35) scale(1.02 1)" font-size="14" font-weight="700" fill="#fff" textLength="103.73" lengthAdjust="spacing">R$ 1.761.825,41</text>
<rect x="1303.4" y="660.28" width="79.3" height="20.1" fill="#3dbc80"/>
<text transform="translate(978.3 676.18) scale(1.03 1)" font-size="15" fill="#fff" textLength="204.56" lengthAdjust="spacing">Bombom Trufado de Morango</text>
<text transform="translate(1321 675.78) scale(1.03 1)" font-size="14" fill="#fff" textLength="95.05" lengthAdjust="spacing">R$ 1.405.007,51</text>
<rect x="1303.4" y="682.71" width="8.3" height="20.1" fill="#3dbc80"/>
<text transform="translate(978.3 698.61) scale(1.03 1)" font-size="15" fill="#fff" textLength="130.58" lengthAdjust="spacing">Bombom de Menta</text>
<text transform="translate(1331.9 698.21) scale(1.03 1)" font-size="14" fill="#fff" textLength="84.47" lengthAdjust="spacing">R$ 151.478,16</text>
<rect x="1303.4" y="705.14" width="5.8" height="20.1" fill="#3dbc80"/>
<text transform="translate(978.3 721.04) scale(1.03 1)" font-size="15" fill="#fff" textLength="149.13" lengthAdjust="spacing">Bombom de Maracujá</text>
<text transform="translate(1331.9 720.64) scale(1.03 1)" font-size="14" fill="#fff" textLength="84.47" lengthAdjust="spacing">R$ 108.306,32</text>
<rect x="1303.4" y="727.57" width="5.5" height="20.1" fill="#3dbc80"/>
<text transform="translate(978.3 743.47) scale(1.03 1)" font-size="15" fill="#fff" textLength="210" lengthAdjust="spacing">Bombom de Caramelo Salgado</text>
<text transform="translate(1339.7 743.07) scale(1.03 1)" font-size="14" fill="#fff" textLength="76.89" lengthAdjust="spacing">R$ 97.033,42</text>
<g transform="translate(943.4 754.9)" fill="none" stroke="#b9b9b9" stroke-width="1.3"><rect x="0.6" y="0.3" width="11" height="10.6" rx="2.2"/><path d="M3 5.6H9.2" stroke-width="1.5"/></g>
<text transform="translate(966.5 765.9) scale(1.02 1)" font-size="15" font-weight="700" fill="#fff" textLength="143.82" lengthAdjust="spacing">Barras de Chocolate</text>
<text transform="translate(1313.1 765.5) scale(1.02 1)" font-size="14" font-weight="700" fill="#fff" textLength="103.73" lengthAdjust="spacing">R$ 1.469.577,12</text>
<rect x="1303.4" y="772.43" width="67.1" height="20.1" fill="#3dbc80"/>
<text transform="translate(978.3 788.33) scale(1.03 1)" font-size="15" fill="#fff" textLength="155.53" lengthAdjust="spacing">Barra ao Leite Suprema</text>
<text transform="translate(1328.8 787.93) scale(1.03 1)" font-size="14" fill="#fff" textLength="87.48" lengthAdjust="spacing">R$ 1.188.049,1</text>
</g>
<text x="966.5" y="801.9" font-size="15" font-weight="700" fill="#fff" textLength="36.1" lengthAdjust="spacing">Total</text>
<text transform="translate(1304.9 801.4) scale(1.02 1)" font-size="14" font-weight="700" fill="#fff" textLength="111.76" lengthAdjust="spacing">R$ 10.744.456,11</text>
<rect x="1456" y="490.8" width="10.4" height="315.2" rx="5.2" fill="#9b9b9b"/>
<rect x="1457.1" y="491.9" width="8.2" height="143.5" rx="4.1" fill="#4f4d4c"/>
</svg></section>
<svg class="wm" width="1498" height="832" viewBox="0 0 1498 832"><line x1="-2" y1="154.05" x2="1500" y2="150.4" stroke="#bdbdbd" stroke-width="1.8"/><text x="1327.6" y="829.6" font-size="19.7" fill="#808080" textLength="153.8" lengthAdjust="spacing">Ativar o Windows</text></svg>
</body></html>
